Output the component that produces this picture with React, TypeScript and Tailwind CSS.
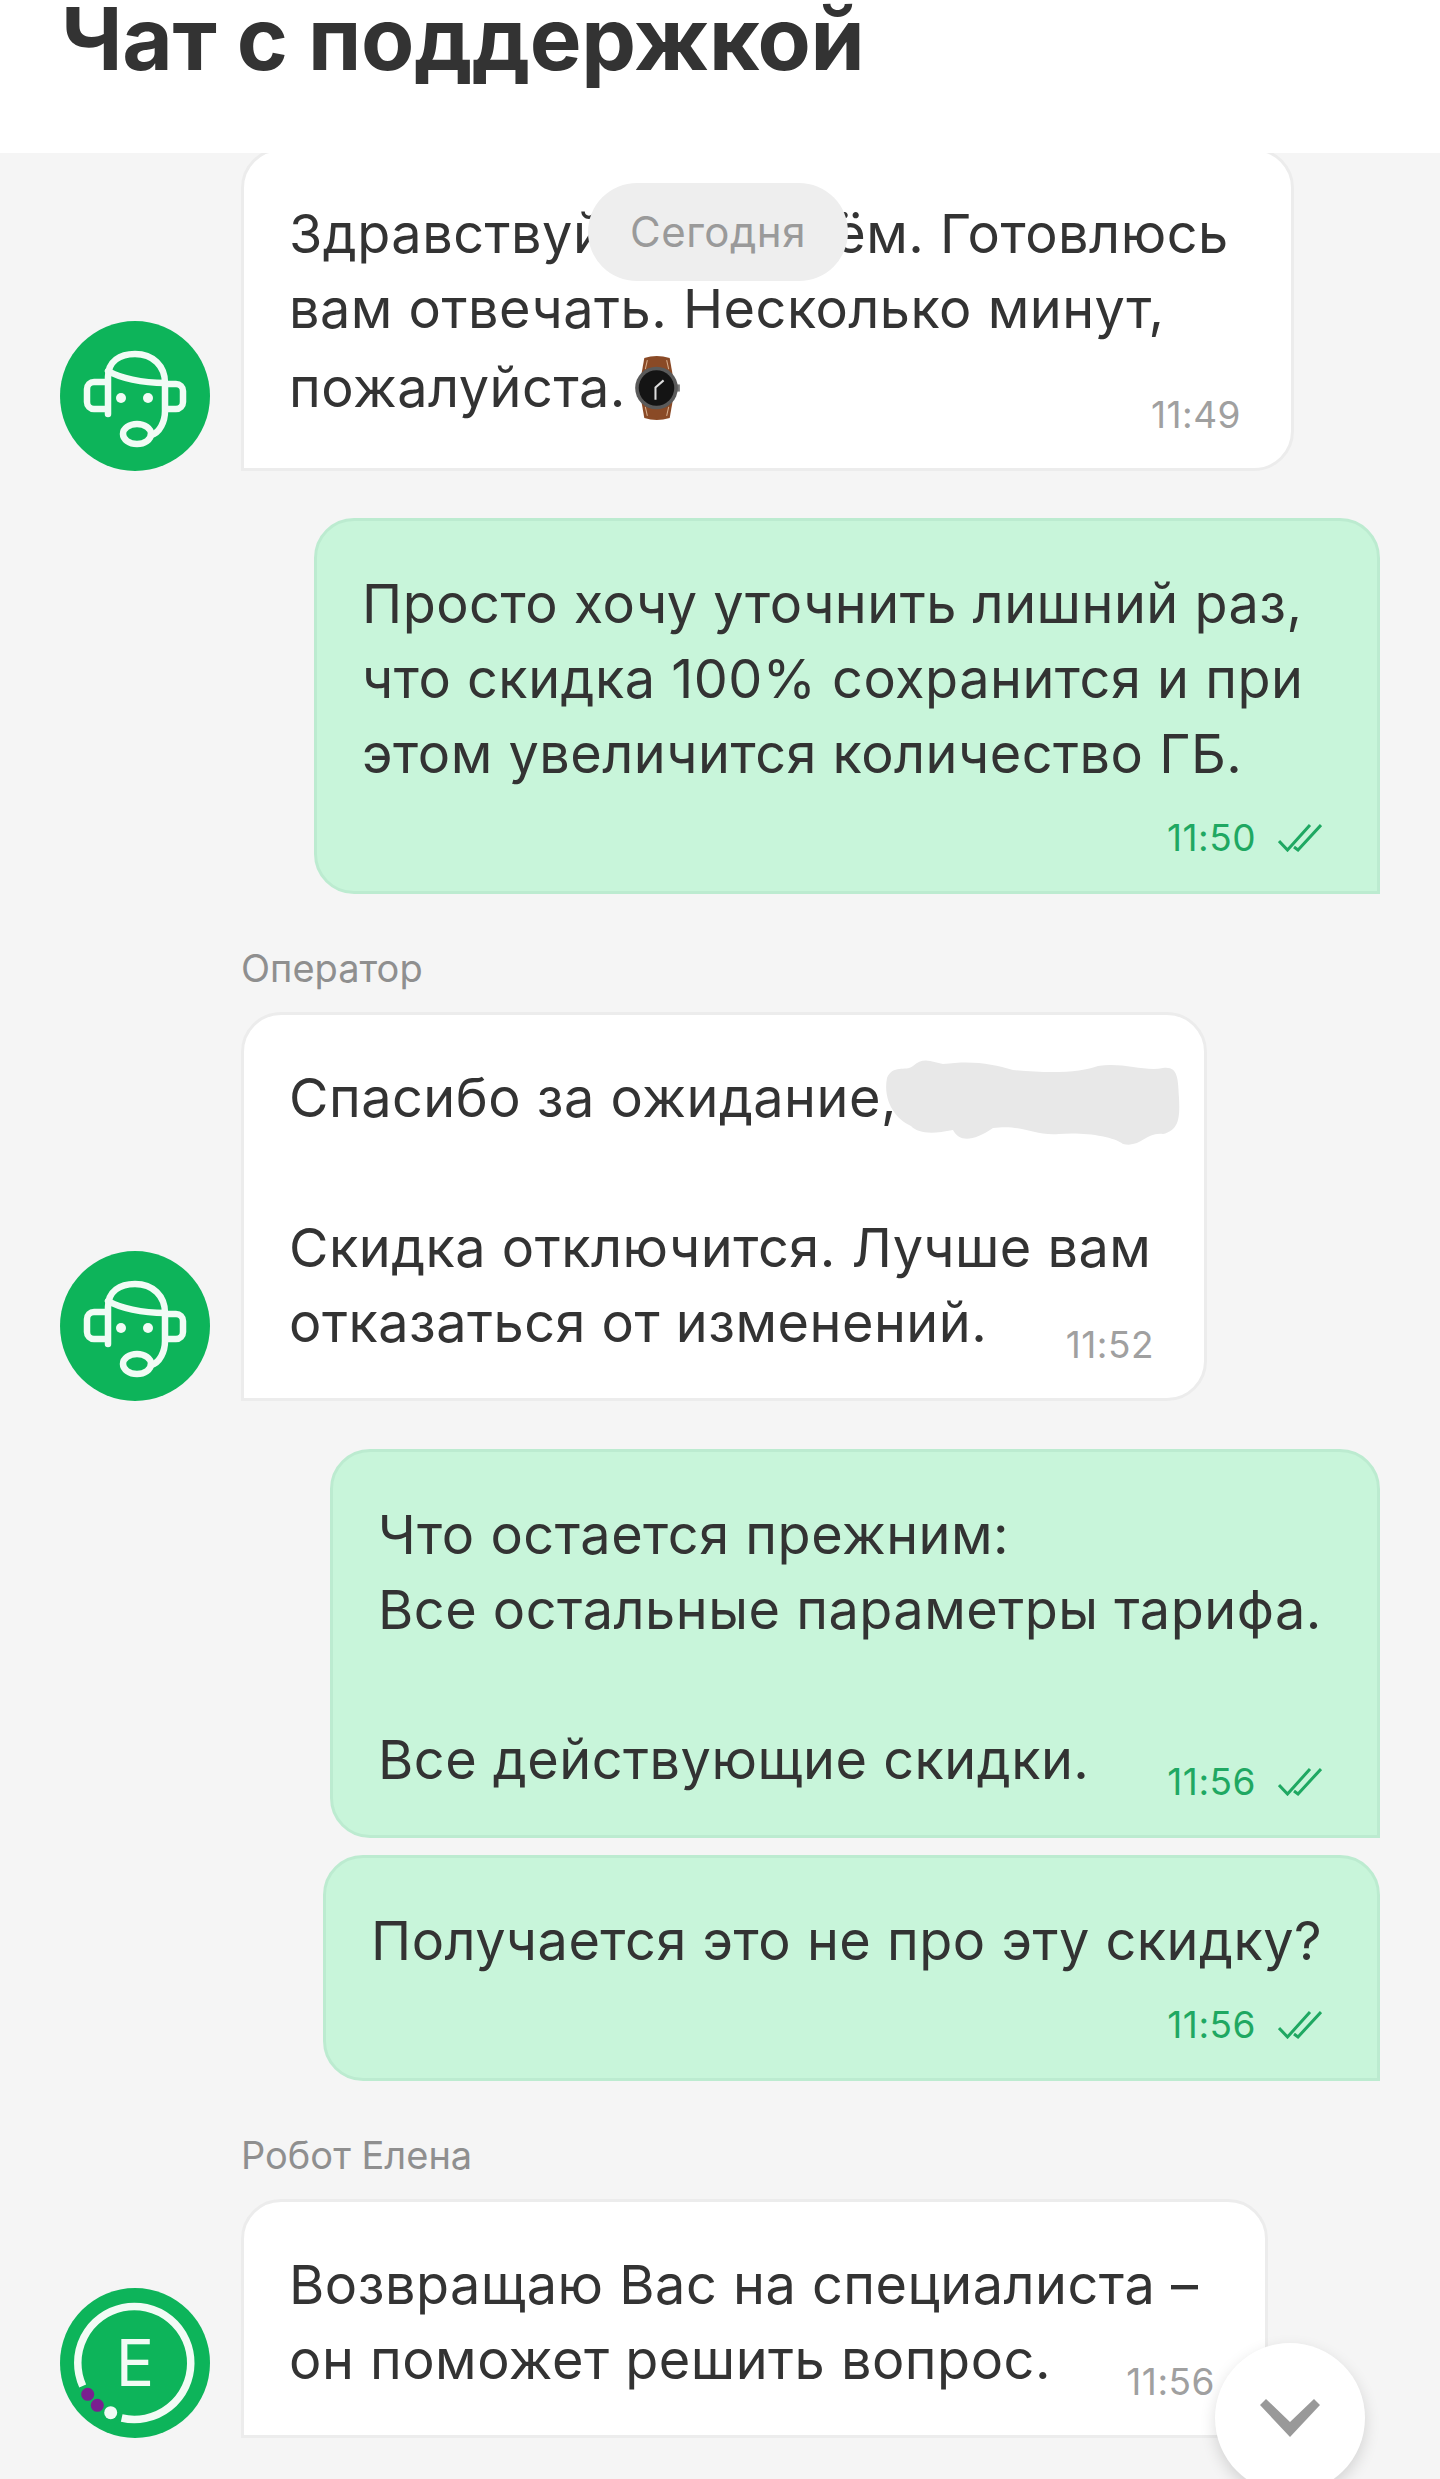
const FONT = "font-['Inter',sans-serif]";

function OperatorAvatar() {
  return (
    <svg width="150" height="150" viewBox="0 0 150 150" className="shrink-0">
      <circle cx="75" cy="75" r="75" fill="#0db45a" />
      <g fill="none" stroke="#f1fbf5" strokeWidth="6.5" strokeLinecap="round" strokeLinejoin="round">
        <path d="M48 93 V56 C48 40 60 33 75 33 C93 33 105 45 105 62 V90 C105 100 100 112 91 114" />
        <path d="M48 50 C60 57 82 62 105 62" />
        <path d="M47 61 H34 a7 7 0 0 0 -7 7 V81 a7 7 0 0 0 7 7 H47" />
        <path d="M106 63 H116 a7 7 0 0 1 7 7 V81 a7 7 0 0 1 -7 7 H106" />
        <ellipse cx="77" cy="113" rx="14" ry="10" />
      </g>
      <circle cx="61" cy="77" r="5" fill="#f1fbf5" />
      <circle cx="88" cy="77" r="5" fill="#f1fbf5" />
    </svg>
  );
}

function RobotAvatar() {
  return (
    <svg width="150" height="150" viewBox="0 0 150 150" className="shrink-0">
      <circle cx="75" cy="75" r="75" fill="#0db45a" />
      <path d="M22.7 98 A56.5 56.5 0 1 1 61.7 130" fill="none" stroke="#f1fbf5" strokeWidth="7.5" />
      <circle cx="27.7" cy="106.3" r="6.5" fill="#7a1f8f" />
      <circle cx="37.3" cy="117.3" r="6.5" fill="#7a1f8f" />
      <circle cx="50.7" cy="124.7" r="6.5" fill="#f1fbf5" />
      <text x="75" y="98" textAnchor="middle" fontSize="64" fontFamily="Inter, sans-serif" fill="#f1fbf5">
        E
      </text>
    </svg>
  );
}

function Checks() {
  return (
    <svg width="44" height="28" viewBox="0 0 44 28" fill="none" stroke="#1fa862" strokeWidth="3">
      <path d="M1 17 L9.5 26 L32 1" />
      <path d="M16 23 L20 26 L43 1" />
    </svg>
  );
}

function Watch() {
  return (
    <svg width="46" height="66" viewBox="0 0 45 65" className="ml-2 inline-block align-[-14px]">
      <path d="M10 3 Q22 -1 35 3 L38 20 H7 Z" fill="#8a4a26" />
      <path d="M7 45 H38 L35 62 Q22 66 10 62 Z" fill="#8a4a26" />
      <path d="M13 5 L11 14 M32 5 L34 14 M11 51 L13 60 M34 51 L32 60" stroke="#d9b08f" strokeWidth="1" />
      <rect x="42" y="29" width="3" height="7" fill="#777" />
      <circle cx="22" cy="32.5" r="21" fill="#5a5a5a" />
      <circle cx="22" cy="32.5" r="17.5" fill="#141414" />
      <path d="M21 44 V32 L29 25" fill="none" stroke="#ddd" strokeWidth="2" />
    </svg>
  );
}

function Time({ children, mine }: { children: React.ReactNode; mine?: boolean }) {
  return (
    <div className={`flex h-10 shrink-0 items-center gap-[22px] text-[37px] leading-10 ${mine ? "text-[#1fa862]" : "text-[#a0a0a0]"}`}>
      <span>{children}</span>
      {mine && <Checks />}
    </div>
  );
}

type BubbleProps = {
  lines: React.ReactNode[];
  time: string;
  mine?: boolean;
  inlineTime?: boolean;
  width: string;
};

function Bubble({ lines, time, mine, inlineTime, width }: BubbleProps) {
  const tone = mine
    ? "bg-[#c8f5da] border-[#bcebd0] rounded-br-none pr-[55px]"
    : "bg-white border-[#ececec] rounded-bl-none pr-[50px]";
  const text = (
    <div className={`w-0 flex-1 whitespace-nowrap ${inlineTime ? "pb-[5px]" : ""}`}>
      {lines.map((line, i) => (
        <div key={i} className="min-h-[75px]">
          {line}
        </div>
      ))}
    </div>
  );
  return (
    <div className={`${width} ${tone} relative rounded-[40px] border-[3px] pt-[45px] pb-[33px] pl-[45px] text-[54px] leading-[75px] tracking-[0.5px] text-[#333333]`}>
      {inlineTime ? (
        <div className="flex items-end justify-between">
          {text}
          <Time mine={mine}>{time}</Time>
        </div>
      ) : (
        <>
          <div className="flex">{text}</div>
          <div className="mt-[27px] flex justify-end">
            <Time mine={mine}>{time}</Time>
          </div>
        </>
      )}
    </div>
  );
}

function Row({ avatar, children }: { avatar: React.ReactNode; children: React.ReactNode }) {
  return (
    <div className="ml-[60px] flex items-end gap-[31px]">
      {avatar}
      {children}
    </div>
  );
}

function Label({ children }: { children: React.ReactNode }) {
  return (
    <div className="mt-[52px] mb-[21px] ml-[241px] h-[45px] text-[38px] leading-[45px] text-[#8f8f8f]">
      {children}
    </div>
  );
}

export default function App() {
  return (
    <div className={`${FONT} relative flex h-[2479px] w-[1440px] flex-col overflow-hidden bg-[#f5f5f5]`}>
      <header className="z-10 h-[153px] shrink-0 overflow-hidden bg-white pl-[61px]">
        <h1 className="mt-[-13px] text-[87px] leading-[104px] font-bold tracking-[-0.3px] whitespace-nowrap text-[#333333]">
          Чат с поддержкой
        </h1>
      </header>

      <main className="mt-[-5px] flex flex-col">
        <Row avatar={<OperatorAvatar />}>
          <Bubble
            width="w-[1053px]"
            inlineTime
            time="11:49"
            lines={[
              "Здравствуйте,\u00a0\u00a0я ждём. Готовлюсь",
              "вам отвечать. Несколько минут,",
              <div className="h-[84px] leading-[84px]">
                пожалуйста.
                <Watch />
              </div>,
            ]}
          />
        </Row>

        <div className="mt-[47px] mr-[60px] flex justify-end">
          <Bubble
            width="w-[1066px]"
            mine
            time="11:50"
            lines={[
              "Просто хочу уточнить лишний раз,",
              "что скидка 100% сохранится и при",
              "этом увеличится количество ГБ.",
            ]}
          />
        </div>

        <Label>Оператор</Label>
        <Row avatar={<OperatorAvatar />}>
          <Bubble
            width="w-[966px]"
            inlineTime
            time="11:52"
            lines={["Спасибо за ожидание,", "", "Скидка отключится. Лучше вам", "отказаться от изменений."]}
          />
        </Row>

        <div className="mt-[48px] mr-[60px] flex justify-end">
          <Bubble
            width="w-[1050px]"
            mine
            inlineTime
            time="11:56"
            lines={["Что остается прежним:", "Все остальные параметры тарифа.", "", "Все действующие скидки."]}
          />
        </div>

        <div className="mt-[17px] mr-[60px] flex justify-end">
          <Bubble width="w-[1057px]" mine time="11:56" lines={["Получается это не про эту скидку?"]} />
        </div>

        <Label>Робот Елена</Label>
        <Row avatar={<RobotAvatar />}>
          <Bubble
            width="w-[1027px]"
            inlineTime
            time="11:56"
            lines={["Возвращаю Вас на специалиста –", "он поможет решить вопрос."]}
          />
        </Row>
      </main>

      {/* date pill over the first message */}
      <div className="absolute top-[183px] left-[588px] flex h-[98px] w-[260px] items-center justify-center rounded-[49px] bg-[#eeeeee] pb-[2px] text-[42px] tracking-[0.5px] text-[#9a9a9a]">
        Сегодня
      </div>

      {/* name painted out on the screenshot */}
      <svg className="absolute top-[1058px] left-[883px]" width="297" height="90" viewBox="0 0 297 90">
        <path
          d="M4 20 C10 6 22 14 30 8 C40 -2 50 4 60 6 C90 2 110 6 130 12 C170 16 200 14 215 8 C240 4 262 14 280 10 C295 8 295 20 296 40 C297 60 296 72 280 76 C262 74 258 90 240 86 C230 78 200 74 176 76 C150 78 140 66 110 70 C90 84 76 84 70 72 C50 76 36 76 28 68 C10 60 0 40 4 20 Z"
          fill="#e8e8e8"
        />
      </svg>

      {/* scroll to bottom */}
      <button className="absolute top-[2343px] left-[1215px] flex h-[150px] w-[150px] items-center justify-center rounded-full bg-white shadow-[0_6px_16px_rgba(0,0,0,0.14)]">
        <svg width="60" height="38" viewBox="0 0 60 38">
          <polygon points="6,0 30,23 54,0 60,6 30,38 0,6" fill="#999999" />
        </svg>
      </button>
    </div>
  );
}
